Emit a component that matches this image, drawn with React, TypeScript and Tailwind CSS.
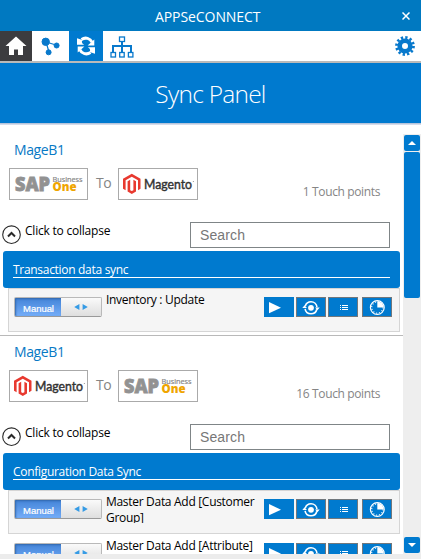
import React from 'react';

function SapLogo() {
  return (
    <svg width="77" height="30" viewBox="0 0 77 30" fontFamily="'Open Sans', sans-serif">
      <text x="5" y="22" fontSize="18.5" fontWeight="800" fill="#929292" stroke="#929292" strokeWidth="0.8" textLength="35" lengthAdjust="spacingAndGlyphs">SAP</text>
      <text x="42.5" y="13" fontSize="7.5" fill="#858585" stroke="#858585" strokeWidth="0.2" textLength="30" lengthAdjust="spacingAndGlyphs">Business</text>
      <text x="42.5" y="22.3" fontSize="11.5" fontWeight="800" fill="#efa500" textLength="24" lengthAdjust="spacingAndGlyphs">One</text>
    </svg>
  );
}

function MagentoLogo() {
  return (
    <svg width="77" height="30" viewBox="0 0 77 30" fontFamily="Lato, sans-serif">
      <path d="M4 9.8 12.8 4.8 21.5 9.8V19.8L19 21.3V11.3L12.8 7.7 6.6 11.3V21.3L4 19.8Z" fill="#e8392f" />
      <path d="M8.6 12.3 11.2 10.8V21.2L12.8 22.1 14.4 21.2V10.8L17 12.3V22.5L12.8 25 8.6 22.5Z" fill="#e8392f" />
      <text x="25" y="19.5" fontSize="13.5" fill="#333" stroke="#333" strokeWidth="0.45" textLength="48" lengthAdjust="spacingAndGlyphs">Magento</text>
      <circle cx="74.3" cy="12.5" r="0.5" fill="#777" />
    </svg>
  );
}

function ActionIcon({ kind }: { kind: string }) {
  const edge = kind === 'play' ? 'border-[#007acc]' : 'border-[#71777c]';
  return (
    <button className={`flex h-5 w-[30px] items-center justify-center border bg-[#007acf] ${edge}`}>
      <svg width="28" height="18" viewBox="0 0 28 18" fill="none" stroke="white">
        {kind === 'play' && <path d="M4 4 16 9.7 4 15.2Z" fill="white" stroke="none" />}
        {kind === 'sync' && (
          <>
            <circle cx="14" cy="9.8" r="6" strokeWidth="1.6" strokeDasharray="15.8 3.05" strokeDashoffset="-1.5" />
            <circle cx="14" cy="9.8" r="2.9" fill="white" stroke="none" />
            <path d="M5.3 10h4.6L7.6 7.3ZM18.1 9.5h4.6l-2.3 2.8Z" fill="white" stroke="none" />
          </>
        )}
        {kind === 'list' && (
          <path d="M11 7.5h1M13 7.5h6M11 9.5h1M13 9.5h6M11 11.5h1M13 11.5h6" strokeWidth="1" />
        )}
        {kind === 'clock' && (
          <>
            <circle cx="14.3" cy="9.5" r="6.9" strokeWidth="1.2" />
            <circle cx="14.3" cy="9.5" r="5.6" strokeWidth="1.2" strokeDasharray="1 1.93" />
            <path d="M14.3 9.5V3.2A6.3 6.3 0 0 1 20.6 9.5Z" fill="white" stroke="none" />
          </>
        )}
      </svg>
    </button>
  );
}

function Toggle() {
  return (
    <div className="flex h-5 w-[88px] shrink-0 overflow-hidden rounded-[2px] border border-[#b9b9b9] border-b-[#999]">
      <div className="flex w-[46px] items-center justify-center bg-linear-to-b from-[#4384d8] to-[#74adf8] pt-1 pl-px font-['Liberation_Sans',sans-serif] text-[9.5px] tracking-[-0.05px] text-white shadow-[inset_1px_1px_2px_#3268ad] [-webkit-text-stroke:0.2px_white]">
        Manual
      </div>
      <div className="flex flex-1 items-center justify-center bg-linear-to-b from-[#fafafa] to-[#dedede]">
        <svg width="14" height="6" viewBox="0 0 14 6" fill="#359be5">
          <path d="M5.4 0V6L.2 3ZM8.6 0V6L13.8 3Z" />
        </svg>
      </div>
    </div>
  );
}

function Row({ label, plain = false }: { label: string; plain?: boolean }) {
  return (
    <div className={`ml-2 flex h-11 w-[392px] border pt-2 pl-[5px] ${plain ? 'border-transparent bg-white' : 'border-[#d5d5d5] bg-[#f5f5f5]'}`}>
      <Toggle />
      <div className="-mt-[5px] ml-1 h-[29px] w-[155px] overflow-hidden text-[12px] leading-4 tracking-[-0.3px]">{label}</div>
      <div className="ml-[3px] flex gap-[2px]">
        <ActionIcon kind="play" />
        <ActionIcon kind="sync" />
        <ActionIcon kind="list" />
        <div className="ml-[2px]"><ActionIcon kind="clock" /></div>
      </div>
    </div>
  );
}

interface SectionProps {
  from: React.ReactNode;
  to: React.ReactNode;
  points: string;
  heading: string;
  children: React.ReactNode;
}

function Section({ from, to, points, heading, children }: SectionProps) {
  return (
    <section className="w-[403px] shrink-0">
      <div className="h-[34px] pt-[6px] pl-[14px] text-[14px] leading-5 tracking-[-0.4px] text-[#0879c5]">MageB1</div>
      <div className="flex h-8 pr-[23px] pl-[9px]">
        <div className="h-8 w-[79px] border border-[#aaa]">{from}</div>
        <div className="w-[30px] pt-[5px] pl-px text-center text-[14px] leading-5 tracking-[-0.6px] text-[#858585]">To</div>
        <div className="h-8 w-20 border border-[#aaa]">{to}</div>
        <div className="ml-auto pt-4 text-[12px] leading-4 tracking-[-0.37px] text-[#858585]">{points}</div>
      </div>
      <div className="flex h-[51px] pt-[22px] pl-[2px]">
        <svg className="mt-[3px]" width="19" height="20" viewBox="0 0 19 20" fill="none" stroke="#292929">
          <circle cx="9.5" cy="9.7" r="8.8" strokeWidth="1.1" />
          <path d="m6 11.5 3.5-3.5 3.5 3.5" strokeWidth="2" />
        </svg>
        <div className="ml-1 w-[165px] text-[12px] leading-[17px] tracking-[-0.22px]">Click to collapse</div>
        <div className="h-[26px] w-[200px] border border-[#7f8587] bg-white pl-[9px] font-['Liberation_Sans',sans-serif] text-[14px] leading-[25px] tracking-[0.12px] text-[#777]">Search</div>
      </div>
      <div className="ml-[3px] h-[37px] w-[397px] rounded-[3px] bg-[#007acf] px-[10px] pt-[10px]">
        <div className="h-[17px] border-b border-white text-[12px] leading-[18px] tracking-[-0.3px] text-white">{heading}</div>
      </div>
      {children}
    </section>
  );
}

export default function App() {
  return (
    <div className="flex h-[559px] w-[421px] flex-col overflow-hidden bg-[#ececec] font-['Open_Sans','Noto_Sans',sans-serif] text-black">
      <header className="flex h-[31px] bg-[#0079c1] text-white">
        <span className="ml-[155px] pt-[7px] text-[14px] leading-5 tracking-[-0.08px]">APPSeCONNECT</span>
        <svg className="mt-3 mr-[11px] ml-auto" width="8" height="8" viewBox="0 0 8 8" stroke="white" strokeWidth="1.5">
          <path d="m.5.5 7 7m0-7-7 7" />
        </svg>
      </header>
      <nav className="flex h-[30px] shrink-0 bg-white">
        <div className="flex w-8 items-center justify-center bg-[#3c3c3f]">
          <svg width="22" height="20" viewBox="0 0 22 20" fill="white"><path d="M11 .5 21.5 10H18v9h-5v-5.5H9V19H4v-9H.5Z" /></svg>
        </div>
        <div className="flex w-[37px] items-center justify-center">
          <svg width="19" height="20" viewBox="0 0 19 20" fill="#0879cc" stroke="#0879cc">
            <path d="m5 6 10 3M5 6l3 10" strokeWidth="1.2" />
            <circle cx="4.7" cy="5.8" r="3.7" /><circle cx="15.6" cy="9.5" r="2.5" /><circle cx="7.6" cy="16.3" r="2.5" />
          </svg>
        </div>
        <div className="flex w-[34px] items-center justify-center bg-[#007acf]">
          <svg width="20" height="20" viewBox="0 0 20 20" fill="none" stroke="white" strokeWidth="3">
            <path d="M5.5 3.4C9.5 .9 14.2 2.3 16 6.2M14.5 16.6C10.5 19.1 5.8 17.7 4 13.8" />
            <path d="M1 2.2v6.6h7.2C5.8 7.4 5.3 5.7 6.5 4M19 17.8v-6.6h-7.2c2.4 1.4 2.9 3.1 1.7 4.8" fill="white" stroke="none" />
            <path d="M18.3 3.5v6h-6.7ZM1.7 16.5v-6h6.7Z" fill="white" stroke="none" />
          </svg>
        </div>
        <svg className="mt-[5px] ml-[7px]" width="24" height="23" viewBox="0 0 24 23" fill="white" stroke="#0879cc">
          <path d="M12 5v12M3 17v-7h18v7" fill="none" strokeWidth="2" />
          <rect x="9.5" y="1" width="5" height="4.5" strokeWidth="1.3" />
          <rect x="1" y="16.5" width="4.5" height="4.5" strokeWidth="1.3" /><rect x="9.7" y="16.5" width="4.5" height="4.5" strokeWidth="1.3" /><rect x="18.4" y="16.5" width="4.5" height="4.5" strokeWidth="1.3" />
        </svg>
        <svg className="mt-[5px] mr-[6px] ml-auto" width="20" height="20" viewBox="0 0 20 20" fill="none" stroke="#0879cc">
          <circle cx="10" cy="10" r="5.3" strokeWidth="4.6" />
          <circle cx="10" cy="10" r="8.5" strokeWidth="2.8" strokeDasharray="2.3 2.15" />
        </svg>
      </nav>
      <div className="h-[2px] shrink-0 bg-[#bababa]" />
      <h1 className="h-[60px] shrink-0 bg-[#007acf] pt-[13px] text-center text-[24.5px] leading-9 font-light tracking-[-0.75px] text-white">Sync Panel</h1>
      <div className="h-[2px] shrink-0 bg-linear-to-b from-[#a9b9d3] to-[#e4e8f3]" />
      <div className="flex h-[429px] shrink-0 overflow-hidden bg-white pt-[9px]">
        <main className="flex h-[420px] w-[403px] flex-col overflow-hidden">
          <Section from={<SapLogo />} to={<MagentoLogo />} points="1 Touch points" heading="Transaction data sync">
            <Row label="Inventory : Update" />
          </Section>
          <div className="mt-[3px] h-px shrink-0 bg-[#b9b9b9]" />
          <Section from={<MagentoLogo />} to={<SapLogo />} points="16 Touch points" heading="Configuration Data Sync">
            <Row label="Master Data Add [Customer Group]" />
            <Row label="Master Data Add [Attribute]" plain />
          </Section>
        </main>
        <aside className="flex h-[420px] w-[18px] flex-col items-center bg-[#eee]">
          <div className="mt-px flex h-4 w-4 shrink-0 items-center justify-center rounded-[2px] bg-[#007acf]">
            <svg width="8" height="4" fill="white"><path d="M0 4 4 0l4 4Z" /></svg>
          </div>
          <div className="mt-px h-[146px] w-4 shrink-0 rounded-[2px] bg-[#007acf]" />
          <div className="mt-auto mb-[1px] flex h-4 w-4 shrink-0 items-center justify-center rounded-[2px] bg-[#007acf]">
            <svg width="8" height="4" fill="white"><path d="m0 0 4 4 4-4Z" /></svg>
          </div>
        </aside>
      </div>
    </div>
  );
}
